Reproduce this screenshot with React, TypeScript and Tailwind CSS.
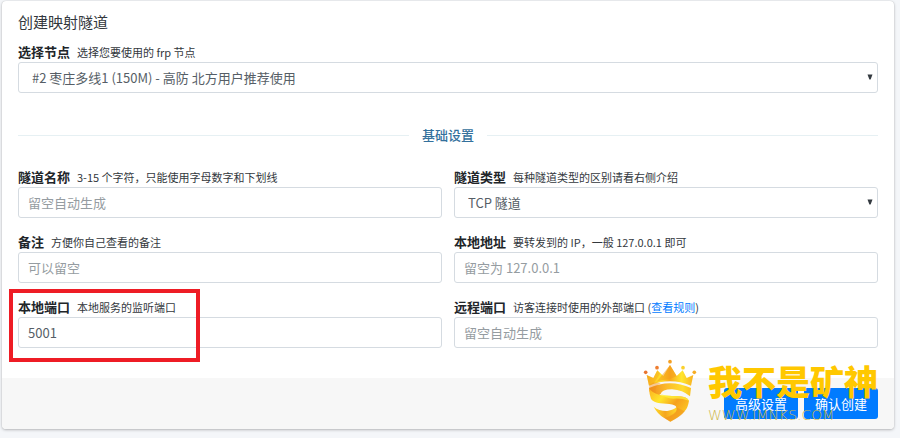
import type { ReactNode } from "react";
import { clsx } from "clsx";

const controlClass =
  "block h-[31px] w-full rounded-[3px] border border-[#d5dbe1] bg-white text-[13px] text-[#565e66] outline-none placeholder:text-[#959ca1] placeholder:opacity-100 focus:border-[#80bdff]";

type FieldProps = {
  id: string;
  label: string;
  hint: ReactNode;
  highlight?: boolean;
  children: ReactNode;
};

function Field({ id, label, hint, highlight, children }: FieldProps) {
  return (
    <div className={clsx(highlight && "relative")}>
      <div className="flex items-baseline gap-[7px] leading-5">
        <label htmlFor={id} className="text-[13px] font-bold text-[#212529]">
          {label}
        </label>
        <small className="text-[11px] text-[#33383d]">{hint}</small>
      </div>
      {children}
      {highlight && (
        <span className="pointer-events-none absolute -top-2 -bottom-3.5 -left-[9px] w-[191px] border-4 border-[#ee1c25]" />
      )}
    </div>
  );
}

function TextInput({ id, placeholder, value }: { id: string; placeholder?: string; value?: string }) {
  return (
    <input
      id={id}
      type="text"
      placeholder={placeholder}
      defaultValue={value}
      className={clsx(controlClass, "px-[9px]")}
    />
  );
}

function SelectInput({ id, options }: { id: string; options: string[] }) {
  return (
    <div className="relative">
      <select id={id} className={clsx(controlClass, "appearance-none pr-6 pl-[13px]")}>
        {options.map((option) => (
          <option key={option}>{option}</option>
        ))}
      </select>
      <svg
        viewBox="0 0 6 6"
        className="pointer-events-none absolute top-3 right-[5px] h-1.5 w-1.5 fill-[#343a40]"
        aria-hidden="true"
      >
        <path d="M0.5 0.5h5L3.6 5.5H2.4z" />
      </svg>
    </div>
  );
}

function CrownLogo() {
  return (
    <svg viewBox="0 0 195 210" className="h-[70px] w-[65px] shrink-0" aria-hidden="true">
      <defs>
        <linearGradient id="crown" x1="0" y1="0" x2="1" y2="0">
          <stop offset="0" stopColor="#f9b51c" />
          <stop offset="0.3" stopColor="#ffe02a" />
          <stop offset="0.5" stopColor="#f9a91b" />
          <stop offset="0.75" stopColor="#ffe62e" />
          <stop offset="1" stopColor="#f9b020" />
        </linearGradient>
        <linearGradient id="bandTop" x1="0" y1="0" x2="1" y2="0">
          <stop offset="0" stopColor="#ee8a1c" />
          <stop offset="0.4" stopColor="#fbb82a" />
          <stop offset="0.8" stopColor="#ffdc2d" />
          <stop offset="1" stopColor="#fbc020" />
        </linearGradient>
        <linearGradient id="bandMid" x1="0" y1="0" x2="1" y2="0.7">
          <stop offset="0" stopColor="#fbb020" />
          <stop offset="0.35" stopColor="#ffe52a" />
          <stop offset="0.65" stopColor="#f6a01e" />
          <stop offset="1" stopColor="#fdcc24" />
        </linearGradient>
        <linearGradient id="bandLow" x1="0" y1="0" x2="1" y2="0">
          <stop offset="0" stopColor="#ffdd2a" />
          <stop offset="0.5" stopColor="#f5a51f" />
          <stop offset="1" stopColor="#ffd82a" />
        </linearGradient>
      </defs>
      <circle cx="90" cy="20" r="5.5" fill="#f4a024" />
      <circle cx="51" cy="38" r="5.5" fill="#ee7d30" />
      <circle cx="129" cy="38" r="5.5" fill="#fbd12b" />
      <circle cx="17" cy="52" r="5.5" fill="#e87430" />
      <circle cx="163" cy="52" r="5.5" fill="#f6ad24" />
      <path
        d="M20 60L40 69L52 46L70 63L90 30L110 63L128 46L140 69L160 60L153 92Q90 66 27 92Z"
        fill="url(#crown)"
      />
      <path d="M90 30L110 63L88 73Q68 74 50 80Z" fill="#f39a1d" opacity="0.5" />
      <path d="M20 60L40 69L52 46L60 56L42 84L27 92Z" fill="#f39a1d" opacity="0.35" />
      {/* ribbon S folded into a shield */}
      <path
        d="M27 99Q90 70 153 99L150 124Q128 105 96 103Q65 103 62 117L44 128Q28 118 27 99Z"
        fill="url(#bandTop)"
      />
      <path
        d="M27 99Q34 113 60 120Q78 123 112 123Q141 124 147 137Q144 158 134 169Q118 187 91 200Q77 193 64 181Q107 171 109 157Q107 149 88 147L61 145Q40 142 33 132Q28 118 27 99Z"
        fill="url(#bandMid)"
      />
      <path d="M27 99Q28 77 62 84Q42 94 48 115Q32 109 27 99Z" fill="#f18e1c" opacity="0.45" />
      <path d="M62 117Q78 123 112 123Q141 124 147 137Q124 129 100 131Q76 130 62 117Z" fill="#fff23a" opacity="0.7" />
      <path d="M41 155Q58 169 82 168Q101 165 109 157Q114 171 97 181Q82 190 74 190Q52 177 41 155Z" fill="url(#bandLow)" />
      <path d="M109 157Q117 172 74 190L91 200Q125 184 134 169Z" fill="#ed891d" opacity="0.45" />
    </svg>
  );
}

function Watermark() {
  return (
    <div className="pointer-events-none absolute right-4 bottom-1 flex items-end gap-[3px] whitespace-nowrap select-none">
      <CrownLogo />
      <div className="flex flex-col gap-1.5 text-[#ffc800]">
        <span className="text-[34px] leading-9 font-black">我不是矿神</span>
        <span className="font-['DejaVu_Sans'] text-[14px] leading-5 font-light text-[#cdb84a]">
          WWW.IMNKS.COM
        </span>
      </div>
    </div>
  );
}

export default function App() {
  return (
    <main className="min-h-screen bg-[#f4f6f9] pt-px pr-1.5 pl-0.5 font-['Noto_Sans_CJK_SC',sans-serif] text-[#33383d]">
      <form
        className="rounded-[4px] bg-white shadow-[0_0_1px_rgba(0,0,0,.2),0_1px_3px_rgba(0,0,0,.25)]"
        onSubmit={(e) => e.preventDefault()}
      >
        <div className="px-4 pt-[11px] pb-[30px]">
          <h3 className="mb-2.5 text-[15px] leading-5">创建映射隧道</h3>
          <Field id="node" label="选择节点" hint="选择您要使用的 frp 节点">
            <SelectInput id="node" options={["#2 枣庄多线1 (150M) - 高防 北方用户推荐使用"]} />
          </Field>

          <div className="mt-8 mb-[22px] flex items-center gap-[13px]">
            <hr className="grow border-[#e6f0f3]" />
            <h4 className="text-[13px] leading-5 font-medium text-[#33709c]">基础设置</h4>
            <hr className="grow border-[#e6f0f3]" />
          </div>

          <div className="grid grid-cols-2 gap-x-3 gap-y-3.5">
            <Field id="name" label="隧道名称" hint="3-15 个字符，只能使用字母数字和下划线">
              <TextInput id="name" placeholder="留空自动生成" />
            </Field>
            <Field id="type" label="隧道类型" hint="每种隧道类型的区别请看右侧介绍">
              <SelectInput id="type" options={["TCP 隧道"]} />
            </Field>
            <Field id="remark" label="备注" hint="方便你自己查看的备注">
              <TextInput id="remark" placeholder="可以留空" />
            </Field>
            <Field id="local-ip" label="本地地址" hint="要转发到的 IP，一般 127.0.0.1 即可">
              <TextInput id="local-ip" placeholder="留空为 127.0.0.1" />
            </Field>
            <Field id="local-port" label="本地端口" hint="本地服务的监听端口" highlight>
              <TextInput id="local-port" value="5001" />
            </Field>
            <Field
              id="remote-port"
              label="远程端口"
              hint={
                <>
                  访客连接时使用的外部端口 (
                  <a href="#rules" className="text-[#007bff]">
                    查看规则
                  </a>
                  )
                </>
              }
            >
              <TextInput id="remote-port" placeholder="留空自动生成" />
            </Field>
          </div>
        </div>

        <div className="relative flex justify-end gap-1.5 rounded-b-[4px] bg-[#f7f7f7] px-4 py-2.5">
          <button type="button" className="h-[31px] rounded-[3px] bg-[#007bff] px-[11px] text-[13px] text-white">
            高级设置
          </button>
          <button type="submit" className="h-[31px] rounded-[3px] bg-[#007bff] px-[11px] text-[13px] text-white">
            确认创建
          </button>
          <Watermark />
        </div>
      </form>
    </main>
  );
}
